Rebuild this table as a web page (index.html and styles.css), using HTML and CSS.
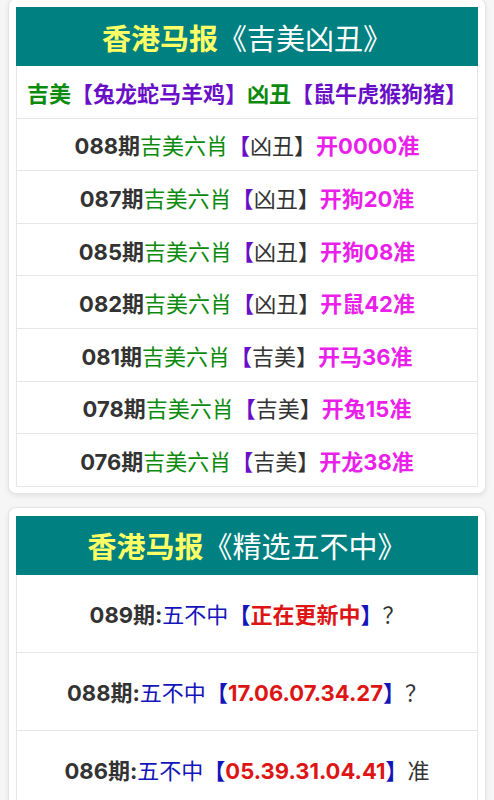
FILE: index.html
```html
<!DOCTYPE html>
<html lang="zh-CN">
<head>
  <meta charset="UTF-8">
  <meta name="viewport" content="width=device-width, initial-scale=1.0">
  <title>香港马报</title>
  <link rel="stylesheet" href="styles.css">
</head>
<body>
<div class="card">
  <table>
    <tr>
      <th><span class="brand">香港马报</span><span class="title">《吉美凶丑》</span></th>
    </tr>
    <tr>
      <td class="legend"><span class="green">吉美</span><span class="purple">【兔龙蛇马羊鸡】</span><span class="green">凶丑</span><span class="purple">【鼠牛虎猴狗猪】</span></td>
    </tr>
    <tr>
      <td><b>088期</b><span class="green">吉美六肖</span><span class="purple">【</span>凶丑】<span class="pink">开0000准</span></td>
    </tr>
    <tr>
      <td><b>087期</b><span class="green">吉美六肖</span><span class="purple">【</span>凶丑】<span class="pink">开狗20准</span></td>
    </tr>
    <tr>
      <td><b>085期</b><span class="green">吉美六肖</span><span class="purple">【</span>凶丑】<span class="pink">开狗08准</span></td>
    </tr>
    <tr>
      <td><b>082期</b><span class="green">吉美六肖</span><span class="purple">【</span>凶丑】<span class="pink">开鼠42准</span></td>
    </tr>
    <tr>
      <td><b>081期</b><span class="green">吉美六肖</span><span class="purple">【</span>吉美】<span class="pink">开马36准</span></td>
    </tr>
    <tr>
      <td><b>078期</b><span class="green">吉美六肖</span><span class="purple">【</span>吉美】<span class="pink">开兔15准</span></td>
    </tr>
    <tr>
      <td><b>076期</b><span class="green">吉美六肖</span><span class="purple">【</span>吉美】<span class="pink">开龙38准</span></td>
    </tr>
  </table>
</div>

<div class="card">
  <table class="tall">
    <tr>
      <th><span class="brand">香港马报</span><span class="title">《精选五不中》</span></th>
    </tr>
    <tr>
      <td><b>089期:</b><span class="blue">五不中</span><b class="blue">【</b><b class="red">正在更新中</b><b class="blue">】</b>？</td>
    </tr>
    <tr>
      <td><b>088期:</b><span class="blue">五不中</span><b class="blue">【</b><b class="red">17.06.07.34.27</b><b class="blue">】</b>？</td>
    </tr>
    <tr>
      <td><b>086期:</b><span class="blue">五不中</span><b class="blue">【</b><b class="red">05.39.31.04.41</b><b class="blue">】</b>准</td>
    </tr>
  </table>
</div>
</body>
</html>
```

FILE: styles.css
```css
body {
  font-family: Inter, "Noto Sans CJK SC", sans-serif;
  margin: 0;
  padding: 0 8px;
  background-color: #f6f6f6;
  color: #333;
}
.card {
  background: white;
  border: 1px solid #e4e4e4;
  border-radius: 8px;
  box-shadow: 0 2px 5px rgba(0, 0, 0, 0.08);
  padding: 8px 7px 6px;
  margin-bottom: 13px;
}
.card:first-child {
  margin-top: -2px;
}
table {
  width: 100%;
  border-collapse: collapse;
}
th {
  background-color: #008080;
  height: 57px;
  padding: 0;
  font-size: 29px;
  border: 1px solid #008080;
}
.brand {
  color: #ffff66;
  font-weight: bold;
}
.title {
  color: white;
  font-weight: normal;
}
td {
  border: 1px solid #e6e6e6;
  height: 51.6px;
  padding: 0;
  text-align: center;
  font-size: 22px;
}
.tall td {
  height: 77px;
}
.legend {
  font-weight: bold;
}
.green {
  color: #0c8a0c;
}
.purple {
  color: #6a0fc8;
  font-weight: bold;
}
.pink {
  color: #ea1fea;
  font-weight: bold;
}
.blue {
  color: #1414bb;
}
.red {
  color: #dd1515;
}
```
